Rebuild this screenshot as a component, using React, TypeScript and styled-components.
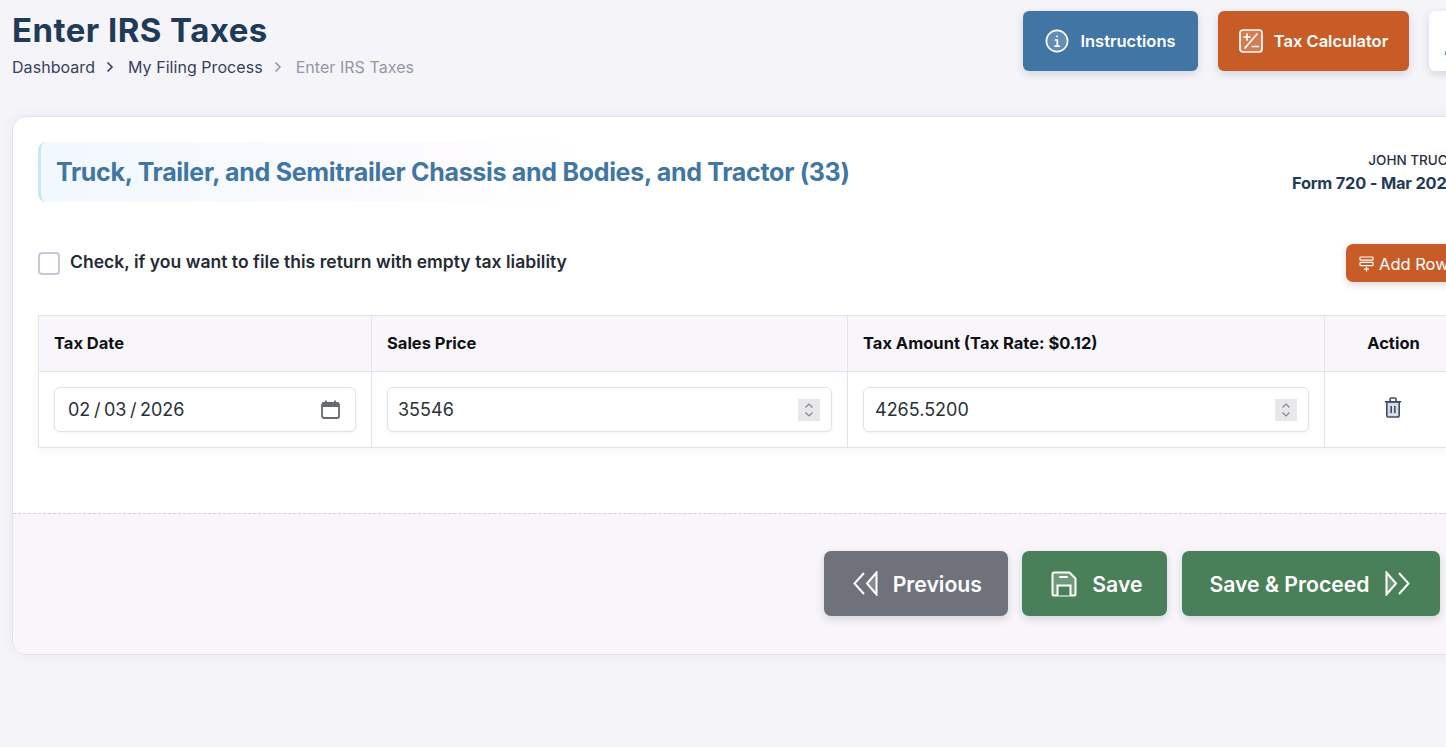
import React from 'react'
import styled, { createGlobalStyle } from 'styled-components'

const GlobalStyle = createGlobalStyle`
  html, body {
    margin: 0;
    height: 100%;
    overflow: hidden;
    background: #f5f4f9;
  }
  * {
    box-sizing: border-box;
  }
  body, input, button {
    font-family: Inter, "Open Sans", "Liberation Sans", sans-serif;
  }
`

const Page = styled.div`
  width: 1501px;
  height: 747px;
  padding: 11px 12px 0;
`

const Header = styled.header`
  display: flex;
  justify-content: space-between;
  align-items: flex-start;
  height: 105px;
`

const Title = styled.h1`
  margin: 0;
  font-size: 33px;
  line-height: 38px;
  font-weight: 700;
  letter-spacing: 0.45px;
  color: #1f3b57;
`

const Breadcrumbs = styled.nav`
  display: flex;
  align-items: center;
  margin-top: 8px;
  font-size: 16px;
  line-height: 20px;
  letter-spacing: 0.05px;
  color: #35425a;
`

const Crumb = styled.span<{ $muted?: boolean }>`
  color: ${(p) => (p.$muted ? '#9398a6' : '#35425a')};
`

const CrumbArrow = styled.svg<{ $muted?: boolean }>`
  width: 10px;
  height: 12px;
  margin: 0 13px 0 10px;
  color: ${(p) => (p.$muted ? '#9398a6' : '#35425a')};
`

const Actions = styled.div`
  display: flex;
  gap: 20px;
`

const TopButton = styled.button<{ $bg: string; $width: number }>`
  display: flex;
  align-items: center;
  justify-content: center;
  gap: 11px;
  width: ${(p) => p.$width}px;
  height: 60px;
  border: 0;
  border-radius: 6px;
  background: ${(p) => p.$bg};
  color: #fff;
  font-size: 16.5px;
  font-weight: 600;
  box-shadow: 0 3px 8px rgba(40, 50, 80, 0.16);
  padding: 0;
`

const Card = styled.main`
  width: 1476px;
  height: 539px;
  background: #fff;
  border: 1px solid #e3e2e9;
  border-radius: 14px;
  box-shadow: 0 0 14px rgba(60, 60, 90, 0.06);
  overflow: hidden;
  display: flex;
  flex-direction: column;
`

const CardBody = styled.section`
  height: 396px;
  padding: 25px 25px 0;
`

const TitleRow = styled.div`
  display: flex;
  justify-content: space-between;
  align-items: center;
`

const Banner = styled.div`
  width: 900px;
  height: 60px;
  display: flex;
  align-items: center;
  padding-left: 15px;
  border-left: 3px solid #c9e7f3;
  border-radius: 8px;
  background: linear-gradient(90deg, #f1f8fe 0%, #fdfbfe 45%, #fff 60%);
`

const BannerTitle = styled.h2`
  margin: 0;
  font-size: 25px;
  font-weight: 700;
  letter-spacing: -0.3px;
  white-space: nowrap;
  color: #3f76a3;
`

const Filer = styled.div`
  margin-right: 5px;
  text-align: right;
`

const FilerName = styled.div`
  font-size: 13.5px;
  line-height: 22px;
  font-weight: 500;
  color: #26303f;
`

const FilerForm = styled.div`
  font-size: 16.4px;
  line-height: 24px;
  font-weight: 700;
  letter-spacing: -0.2px;
  color: #1f3b57;
`

const OptionRow = styled.div`
  display: flex;
  justify-content: space-between;
  align-items: flex-start;
  margin-top: 42px;
  height: 71px;
`

const CheckLabel = styled.label`
  display: flex;
  align-items: center;
  gap: 10px;
  margin-top: 4px;
  font-size: 17.5px;
  font-weight: 600;
  letter-spacing: 0.03px;
  color: #252b35;
`

const Check = styled.span`
  width: 22px;
  height: 23px;
  margin-top: 4px;
  border: 2px solid #c5c8d6;
  border-radius: 4px;
  background: #fff;
`

const AddRow = styled.button`
  display: flex;
  align-items: center;
  gap: 5px;
  width: 116px;
  height: 38px;
  padding: 2px 0 0 13px;
  border: 0;
  border-radius: 7px;
  background: #c85c27;
  color: #fff;
  font-size: 16.5px;
  font-weight: 400;
  box-shadow: 0 3px 7px rgba(70, 50, 40, 0.18);
`

const Table = styled.table`
  width: 1424px;
  table-layout: fixed;
  border-collapse: collapse;
  box-shadow: 0 4px 8px rgba(60, 60, 90, 0.04);
`

const Th = styled.th<{ $center?: boolean; $width: number }>`
  width: ${(p) => p.$width}px;
  height: 56px;
  padding: 0 15px 2px;
  background: #f8f6fa;
  border: 1px solid #e4e3ea;
  text-align: ${(p) => (p.$center ? 'center' : 'left')};
  font-size: 16.5px;
  font-weight: 700;
  color: #0f1115;
`

const Td = styled.td<{ $center?: boolean }>`
  height: 76px;
  padding: 0 15px;
  border: 1px solid #e4e3ea;
  text-align: ${(p) => (p.$center ? 'center' : 'left')};
`

const Field = styled.div<{ $padLeft: number; $padRight: number }>`
  display: flex;
  align-items: center;
  height: 45px;
  padding: 0 ${(p) => p.$padRight}px 0 ${(p) => p.$padLeft}px;
  background: #fff;
  border: 1px solid #e3e1e8;
  border-radius: 6px;
  box-shadow: 0 1px 3px rgba(60, 60, 90, 0.07);
`

const FieldInput = styled.input<{ $tight?: boolean }>`
  flex: 1;
  min-width: 0;
  border: 0;
  outline: 0;
  padding: 0;
  background: transparent;
  font-size: 18px;
  word-spacing: ${(p) => (p.$tight ? '-1.5px' : '0')};
  color: #2a2f3a;
`

const Spinner = styled.span`
  display: flex;
  width: 22px;
  height: 22px;
  background: #e8e7ea;
  color: #83868e;
`

const TrashButton = styled.button`
  display: inline-flex;
  margin-right: 2px;
  padding: 0;
  border: 0;
  background: transparent;
  color: #3d4a68;
`

const Footer = styled.footer`
  flex: 1;
  display: flex;
  justify-content: flex-end;
  gap: 14.6px;
  padding: 37px 47px 0 0;
  background: #f8f6fa;
  border-top: 1px dashed #dcc9d2;
`

const FooterButton = styled.button<{ $bg: string; $width: number; $padLeft?: number; $padRight?: number }>`
  display: flex;
  align-items: center;
  justify-content: center;
  gap: 15px;
  width: ${(p) => p.$width}px;
  height: 65px;
  padding: 0 ${(p) => p.$padRight ?? 0}px 0 ${(p) => p.$padLeft ?? 0}px;
  border: 0;
  border-radius: 7px;
  background: ${(p) => p.$bg};
  color: #fff;
  font-size: 21.2px;
  font-weight: 600;
  box-shadow: 0 3px 8px rgba(40, 50, 80, 0.18);
`

const HelpButton = styled(TopButton)`
  justify-content: flex-start;
  padding-left: 16px;
`

const Chevron = ({ muted }: { muted?: boolean }) => (
  <CrumbArrow $muted={muted} viewBox="0 0 10 12" fill="none" stroke="currentColor" strokeWidth="1.6">
    <path d="M2.5 1.5 7 6l-4.5 4.5" />
  </CrumbArrow>
)

const InfoIcon = () => (
  <svg width="24" height="24" viewBox="0 0 24 24" fill="none" stroke="#fff" strokeWidth="1.7">
    <circle cx="12" cy="12" r="10.6" fill="rgba(255,255,255,0.18)" />
    <path d="M10.3 11h2v6M10 17.2h4.2" strokeLinecap="round" />
    <circle cx="12" cy="7.4" r="0.9" fill="#fff" stroke="none" />
  </svg>
)

const CalcIcon = () => (
  <svg width="24" height="24" viewBox="0 0 24 24" fill="none" stroke="#fff" strokeWidth="1.7">
    <rect x="1" y="1" width="22" height="22" rx="3" fill="rgba(255,255,255,0.2)" />
    <path d="M5 8h6M8 5v6M6 19 18 5M13.5 17.500h6" strokeLinecap="round" />
  </svg>
)

const UserIcon = () => (
  <svg width="24" height="28" viewBox="0 0 24 28" fill="#4176a4">
    <circle cx="12" cy="8" r="6" />
    <path d="M0 28c0-7 5-12 12-12s12 5 12 12z" />
  </svg>
)

const AddRowIcon = () => (
  <svg width="15" height="16" viewBox="0 0 15 16" fill="none" stroke="#fff" strokeWidth="1.2">
    <rect x="1" y="1" width="13" height="3.2" rx="0.6" />
    <rect x="1" y="6.400" width="13" height="3.200" rx="0.600" />
    <path d="M5 13.200h5M7.500 11v4.400" />
  </svg>
)

const CalendarIcon = () => (
  <svg width="19" height="19" viewBox="0 0 19 19" fill="none">
    <rect x="1" y="3" width="17" height="15" rx="2" stroke="#666a72" strokeWidth="1.8" />
    <path d="M1 3.500a1.500 1.500 0 0 1 1.500-1.500h14A1.500 1.500 0 0 1 18 3.500V7H1z" fill="#666a72" />
    <path d="M5 .5v3M14 .5v3" stroke="#666a72" strokeWidth="1.8" />
  </svg>
)

const SpinnerIcon = () => (
  <svg width="22" height="22" viewBox="0 0 22 22" fill="none" stroke="currentColor" strokeWidth="1.2">
    <path d="M7.500 8.500 11 5l3.500 3.500M7.500 13.500 11 17l3.500-3.500" />
  </svg>
)

const TrashIcon = () => (
  <svg width="18" height="21" viewBox="0 0 18 21" fill="none" stroke="currentColor" strokeWidth="1.6">
    <path d="M2.800 5h12.400v13.600a1.400 1.400 0 0 1-1.400 1.400H4.200a1.400 1.400 0 0 1-1.400-1.400z" fill="#d9dce5" />
    <path d="M.8 4.800h16.400M6 4.500V2.200A1.200 1.200 0 0 1 7.200 1h3.600A1.200 1.200 0 0 1 12 2.200v2.300M7.200 9v7M10.800 9v7" />
  </svg>
)

const PrevIcon = () => (
  <svg width="25" height="25" viewBox="0 0 25 25" fill="none" stroke="#fff" strokeWidth="2" strokeLinejoin="miter">
    <path d="M11 2 1.500 12.500 11 23" />
    <path d="M23.500 1.500v22L14 12.500z" fill="rgba(255,255,255,0.18)" />
  </svg>
)

const NextIcon = () => (
  <svg width="25" height="25" viewBox="0 0 25 25" fill="none" stroke="#fff" strokeWidth="2" strokeLinejoin="miter">
    <path d="M14 2l9.500 10.500L14 23" />
    <path d="M1.500 1.500v22L11 12.500z" fill="rgba(255,255,255,0.18)" />
  </svg>
)

const SaveIcon = () => (
  <svg width="26" height="26" viewBox="0 0 26 26" fill="none" stroke="#fff" strokeWidth="2">
    <path
      d="M1.500 3A1.500 1.500 0 0 1 3 1.500h15.500l6 6V23a1.500 1.500 0 0 1-1.500 1.500H3A1.500 1.500 0 0 1 1.500 23z"
      fill="rgba(255,255,255,0.2)"
    />
    <path d="M6.500 24.500V14.500h13v10" fill="#4a8059" />
    <path d="M9 6h7" strokeLinecap="round" />
  </svg>
)

export default function App() {
  return (
    <Page>
      <GlobalStyle />
      <Header>
        <div>
          <Title>Enter IRS Taxes</Title>
          <Breadcrumbs>
            <Crumb>Dashboard</Crumb>
            <Chevron />
            <Crumb>My Filing Process</Crumb>
            <Chevron muted />
            <Crumb $muted>Enter IRS Taxes</Crumb>
          </Breadcrumbs>
        </div>
        <Actions>
          <TopButton $bg="#4176a4" $width={175}>
            <InfoIcon />
            Instructions
          </TopButton>
          <TopButton $bg="#c85c27" $width={191}>
            <CalcIcon />
            Tax Calculator
          </TopButton>
          <HelpButton $bg="#fff" $width={60}>
            <UserIcon />
          </HelpButton>
        </Actions>
      </Header>

      <Card>
        <CardBody>
          <TitleRow>
            <Banner>
              <BannerTitle>Truck, Trailer, and Semitrailer Chassis and Bodies, and Tractor (33)</BannerTitle>
            </Banner>
            <Filer>
              <FilerName>JOHN TRUCK</FilerName>
              <FilerForm>Form 720 - Mar 2026</FilerForm>
            </Filer>
          </TitleRow>

          <OptionRow>
            <CheckLabel>
              <Check />
              Check, if you want to file this return with empty tax liability
            </CheckLabel>
            <AddRow>
              <AddRowIcon />
              Add Row
            </AddRow>
          </OptionRow>

          <Table>
            <thead>
              <tr>
                <Th $width={333}>Tax Date</Th>
                <Th $width={476}>Sales Price</Th>
                <Th $width={477}>Tax Amount (Tax Rate: $0.12)</Th>
                <Th $width={138} $center>
                  Action
                </Th>
              </tr>
            </thead>
            <tbody>
              <tr>
                <Td>
                  <Field $padLeft={13} $padRight={15}>
                    <FieldInput $tight defaultValue="02 / 03 / 2026" />
                    <CalendarIcon />
                  </Field>
                </Td>
                <Td>
                  <Field $padLeft={10} $padRight={11}>
                    <FieldInput defaultValue="35546" />
                    <Spinner>
                      <SpinnerIcon />
                    </Spinner>
                  </Field>
                </Td>
                <Td>
                  <Field $padLeft={11} $padRight={11}>
                    <FieldInput defaultValue="4265.5200" />
                    <Spinner>
                      <SpinnerIcon />
                    </Spinner>
                  </Field>
                </Td>
                <Td $center>
                  <TrashButton>
                    <TrashIcon />
                  </TrashButton>
                </Td>
              </tr>
            </tbody>
          </Table>
        </CardBody>

        <Footer>
          <FooterButton $bg="#6f727b" $width={184} $padLeft={3}>
            <PrevIcon />
            Previous
          </FooterButton>
          <FooterButton $bg="#4a8059" $width={145} $padLeft={4}>
            <SaveIcon />
            Save
          </FooterButton>
          <FooterButton $bg="#4a8059" $width={258} $padRight={3}>
            Save &amp; Proceed
            <NextIcon />
          </FooterButton>
        </Footer>
      </Card>
    </Page>
  )
}
